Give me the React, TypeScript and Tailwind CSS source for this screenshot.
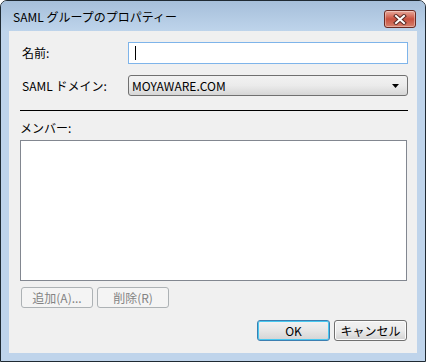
import React from 'react';

const font = { fontFamily: '"Noto Sans CJK JP", "Noto Sans", sans-serif' };

function CloseButton() {
  return (
    <div className="flex h-[18px] w-[32px] items-center justify-center rounded-[3px] border border-[#6b2a22] bg-gradient-to-b from-[#e8a99c] via-[#c8503f] to-[#d6806c] shadow-[inset_0_0_0_1px_rgba(255,255,255,0.35)]">
      <svg width="14" height="11" viewBox="0 0 14 11">
        <path d="M3 2 L11 9 M11 2 L3 9" stroke="#5a2a24" strokeWidth="4" strokeLinecap="square" />
        <path d="M3 2 L11 9 M11 2 L3 9" stroke="#ffffff" strokeWidth="2" strokeLinecap="square" />
      </svg>
    </div>
  );
}

function DialogButton({ label, disabled, primary }: { label: string; disabled?: boolean; primary?: boolean }) {
  if (disabled) {
    return (
      <div className="flex h-[21px] w-[72px] items-center justify-center rounded-[3px] border border-[#adb2b5] bg-[#f4f4f4] text-[12px] text-[#838383]">
        {label}
      </div>
    );
  }
  return (
    <div
      className={
        primary
          ? 'flex h-[21px] w-[73px] items-center justify-center rounded-[3px] border border-[#3c7fb1] bg-gradient-to-b from-[#f2f2f2] via-[#e6e6e6] to-[#d4d4d4] text-[12px] text-black shadow-[inset_0_0_0_1px_#48c8f0]'
          : 'flex h-[21px] w-[73px] items-center justify-center rounded-[3px] border border-[#707070] bg-gradient-to-b from-[#f2f2f2] via-[#ebebeb] to-[#d2d2d2] text-[12px] text-black shadow-[inset_0_0_0_1px_#fcfcfc]'
      }
    >
      {label}
    </div>
  );
}

export default function App() {
  return (
    <div style={font} className="h-[362px] w-[426px] overflow-hidden bg-white">
      <div className="flex h-[362px] w-[426px] flex-col rounded-t-[7px] border border-[#1f2a33] bg-[#bfd4eb]">
        {/* title bar */}
        <div className="flex h-[30px] items-start justify-between rounded-t-[6px] bg-gradient-to-b from-[#a6bfda] to-[#bed4eb] pl-[12px] pr-[9px]">
          <span className="mt-[8px] text-[12px] leading-[16px] text-black">SAML グループのプロパティー</span>
          <div className="mt-[9px]">
            <CloseButton />
          </div>
        </div>

        {/* client area */}
        <div className="mx-[8px] mb-[8px] flex flex-1 flex-col bg-[#f0f0f0] pl-[11px] pr-[9px] pt-[11px] text-[12px] text-black">
          <div className="flex h-[22px] items-center">
            <span className="w-[108px] pl-[2px]">名前:</span>
            <div className="flex h-[22px] flex-1 items-center border border-[#7eb4ea] bg-white pl-[6px]">
              <div className="h-[14px] w-[1px] bg-black" />
            </div>
          </div>

          <div className="mt-[11px] flex h-[21px] items-center">
            <span className="w-[108px] pl-[2px]">SAML ドメイン:</span>
            <div className="flex h-[21px] flex-1 items-center justify-between rounded-[3px] border border-[#707070] bg-gradient-to-b from-[#f2f2f2] via-[#ebebeb] to-[#d6d6d6] pl-[3px] pr-[8px]">
              <span>MOYAWARE.COM</span>
              <svg width="7" height="4" viewBox="0 0 7 4">
                <path d="M0 0 H7 L3.5 4 Z" fill="#000" />
              </svg>
            </div>
          </div>

          <div className="mt-[14px] h-[1px] bg-black" />

          <div className="mt-[9px] h-[16px] leading-[16px]">メンバー:</div>

          <div className="mt-[4px] mr-[1px] h-[141px] border border-[#828790] bg-white" />

          <div className="mt-[6px] flex gap-[4px] pl-[1px]">
            <DialogButton label="追加(A)..." disabled />
            <DialogButton label="削除(R)" disabled />
          </div>

          <div className="mt-[12px] flex justify-end gap-[4px] pr-[1px]">
            <DialogButton label="OK" primary />
            <DialogButton label="キャンセル" />
          </div>
        </div>
      </div>
    </div>
  );
}
